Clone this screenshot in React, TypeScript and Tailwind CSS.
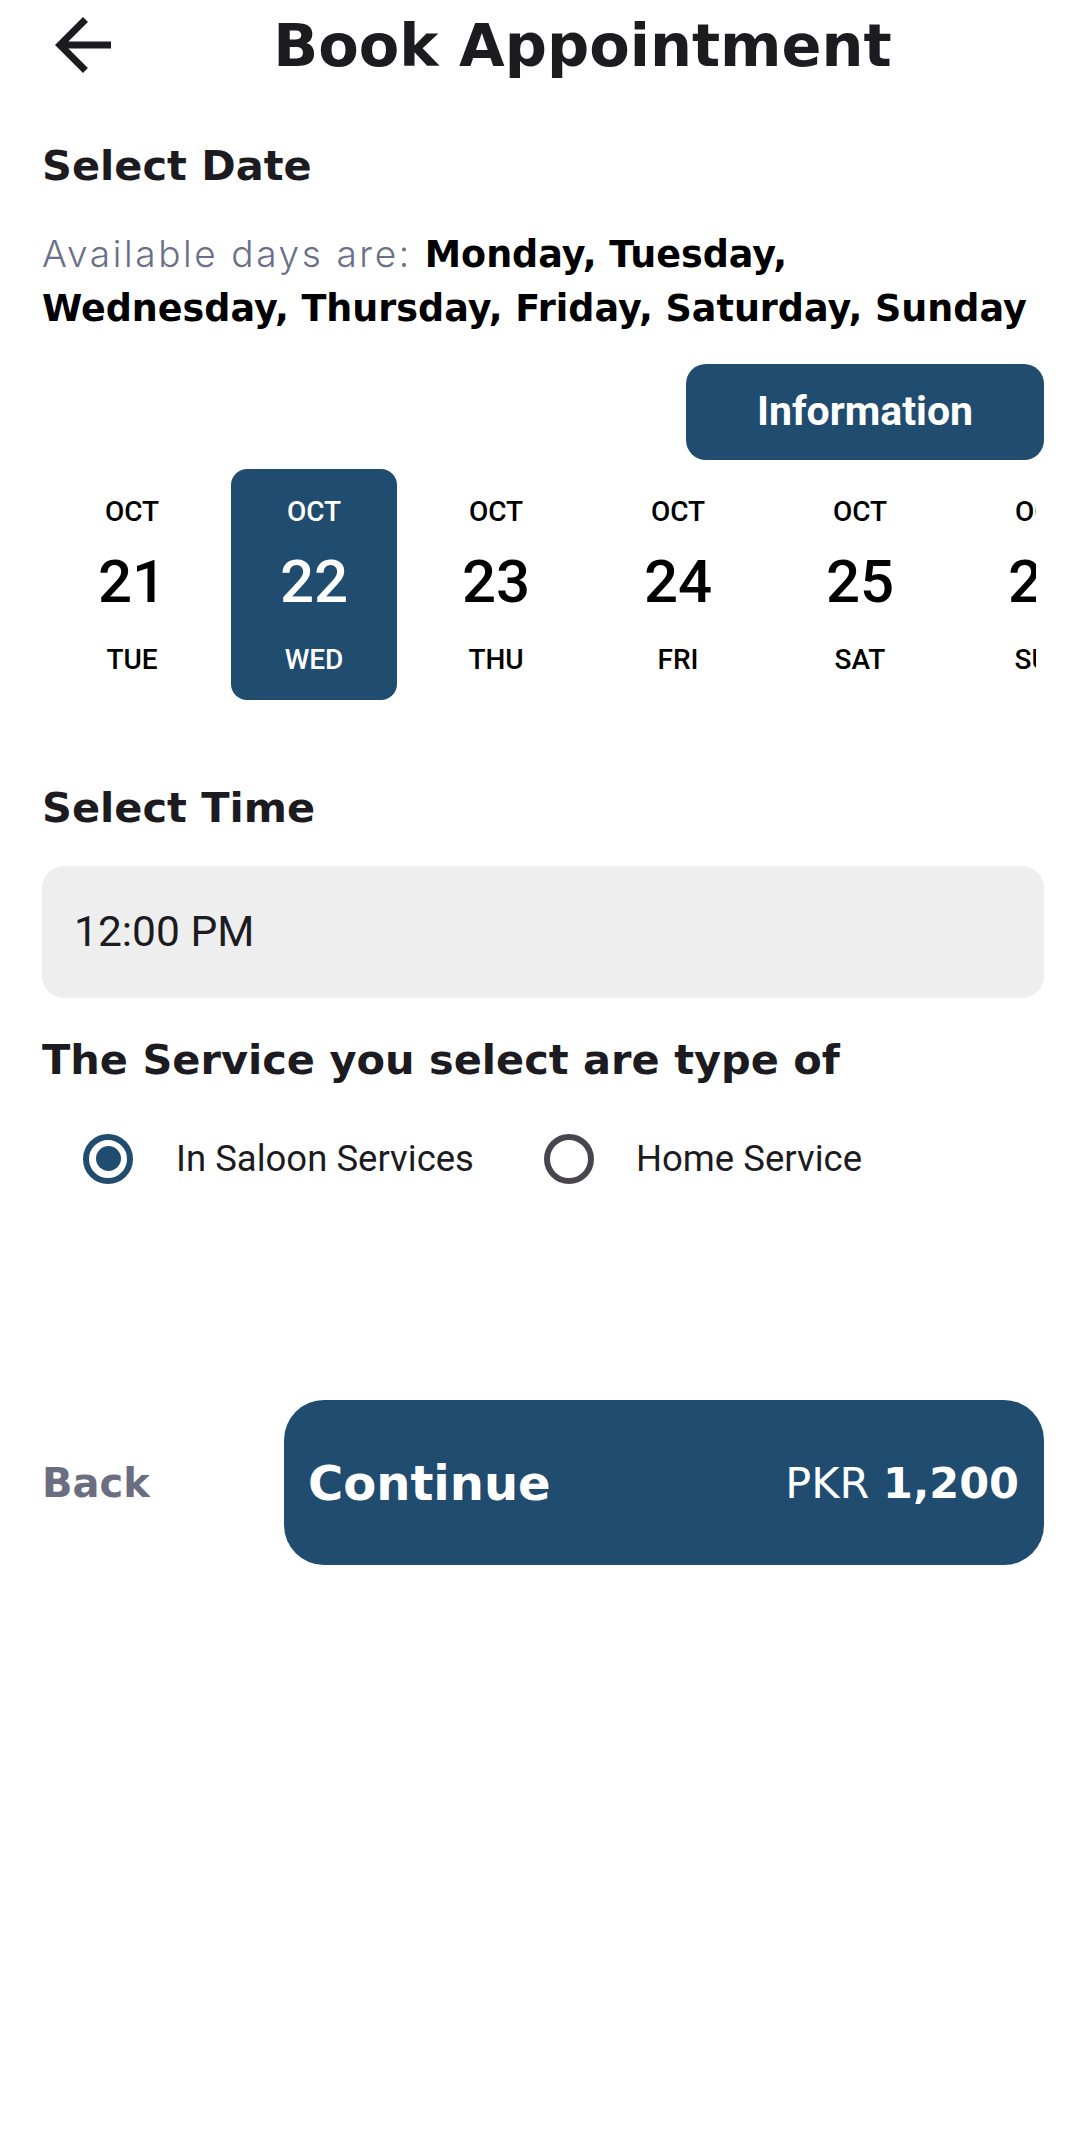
import React from 'react';

const dates = [
  { month: 'OCT', day: '21', week: 'TUE' },
  { month: 'OCT', day: '22', week: 'WED' },
  { month: 'OCT', day: '23', week: 'THU' },
  { month: 'OCT', day: '24', week: 'FRI' },
  { month: 'OCT', day: '25', week: 'SAT' },
  { month: 'OCT', day: '26', week: 'SUN' },
  { month: 'OCT', day: '27', week: 'MON' },
];

const heading = { fontFamily: '"DejaVu Sans", Inter, sans-serif' };
const light = { fontFamily: 'Inter, "Open Sans", sans-serif' };
const roboto = { fontFamily: 'Roboto, "Liberation Sans", sans-serif' };

export default function App() {
  const selected = 1;

  return (
    <div className="w-[1080px] min-h-[2134px] bg-white text-[#1c1b1f]">
      {/* Header */}
      <div className="h-[90px] flex items-center pl-[41px]">
        <svg width="84" height="84" viewBox="0 0 24 24" fill="#1c1b1f">
          <path d="M20 11H7.83l5.59-5.59L12 4l-8 8 8 8 1.41-1.41L7.83 13H20v-2z" />
        </svg>
        <h1 style={heading} className="flex-1 text-center pr-[40px] text-[59px] leading-none font-bold">
          Book Appointment
        </h1>
      </div>

      <div className="pl-[42px] pr-[36px]">
        <h2 style={heading} className="mt-[55px] text-[41.5px] leading-none font-bold">Select Date</h2>

        <p style={heading} className="mt-[40px] text-[36.5px] leading-[54px] whitespace-nowrap">
          <span style={light} className="font-light text-[37px] tracking-[2.6px] text-[#6a7089]">Available days are: </span>
          <span className="font-bold text-black">
            Monday, Tuesday,
            <br />
            Wednesday, Thursday, Friday, Saturday, Sunday
          </span>
        </p>

        <div className="mt-[28px] flex justify-end">
          <button
            style={roboto}
            className="w-[358px] h-[96px] rounded-[20px] bg-[#1f4c6f] text-white text-[41px] font-bold"
          >
            Information
          </button>
        </div>
      </div>

      {/* Date strip */}
      <div className="mt-[9px] ml-[42px] mr-[44px] overflow-hidden">
        <div className="flex gap-[16px] pl-[7px] w-max">
          {dates.map((d, i) => {
            const active = i === selected;
            return (
              <div
                key={d.day}
                style={roboto}
                className={`w-[166px] h-[231px] rounded-[16px] flex flex-col items-center pt-[29px] font-medium ${
                  active ? 'bg-[#1f4c6f] text-white' : 'text-black'
                }`}
              >
                <span className="text-[28px] leading-none">{d.month}</span>
                <span className="mt-[26px] text-[60px] leading-none">{d.day}</span>
                <span className="mt-[34px] text-[28px] leading-none">{d.week}</span>
              </div>
            );
          })}
        </div>
      </div>

      <div className="pl-[42px] pr-[36px]">
        <h2 style={heading} className="mt-[87px] text-[41.5px] leading-none font-bold">Select Time</h2>

        <div className="mt-[38px] h-[132px] rounded-[22px] bg-[#eeeeee] flex items-center pl-[32px]">
          <span style={roboto} className="text-[42.5px] text-[#1c1b1f]">12:00 PM</span>
        </div>

        <h2 style={heading} className="mt-[41px] text-[41.5px] leading-none font-bold">
          The Service you select are type of
        </h2>

        {/* Service type radios */}
        <div className="mt-[51px] flex items-center pl-[41px]" style={roboto}>
          <div className="w-[461px] flex items-center gap-[43px]">
            <div className="w-[50px] h-[50px] rounded-full border-[6px] border-[#1f4c6f] flex items-center justify-center">
              <div className="w-[25px] h-[25px] rounded-full bg-[#1f4c6f]" />
            </div>
            <span className="text-[36.5px] text-[#1c1b1f]">In Saloon Services</span>
          </div>
          <div className="flex items-center gap-[42px]">
            <div className="w-[50px] h-[50px] rounded-full border-[6px] border-[#49454f]" />
            <span className="text-[36.5px] text-[#1c1b1f]">Home Service</span>
          </div>
        </div>

        {/* Bottom actions */}
        <div className="mt-[214px] flex items-center">
          <span style={heading} className="w-[242px] text-[40px] font-bold text-[#6b6e80]">Back</span>
          <button
            style={heading}
            className="flex-1 h-[165px] rounded-[40px] bg-[#1f4c6f] text-white flex items-center justify-between pl-[24px] pr-[25px]"
          >
            <span className="text-[48px] font-bold">Continue</span>
            <span className="text-[43px]">
              <span className="font-normal">PKR </span>
              <span className="font-bold">1,200</span>
            </span>
          </button>
        </div>
      </div>
    </div>
  );
}
